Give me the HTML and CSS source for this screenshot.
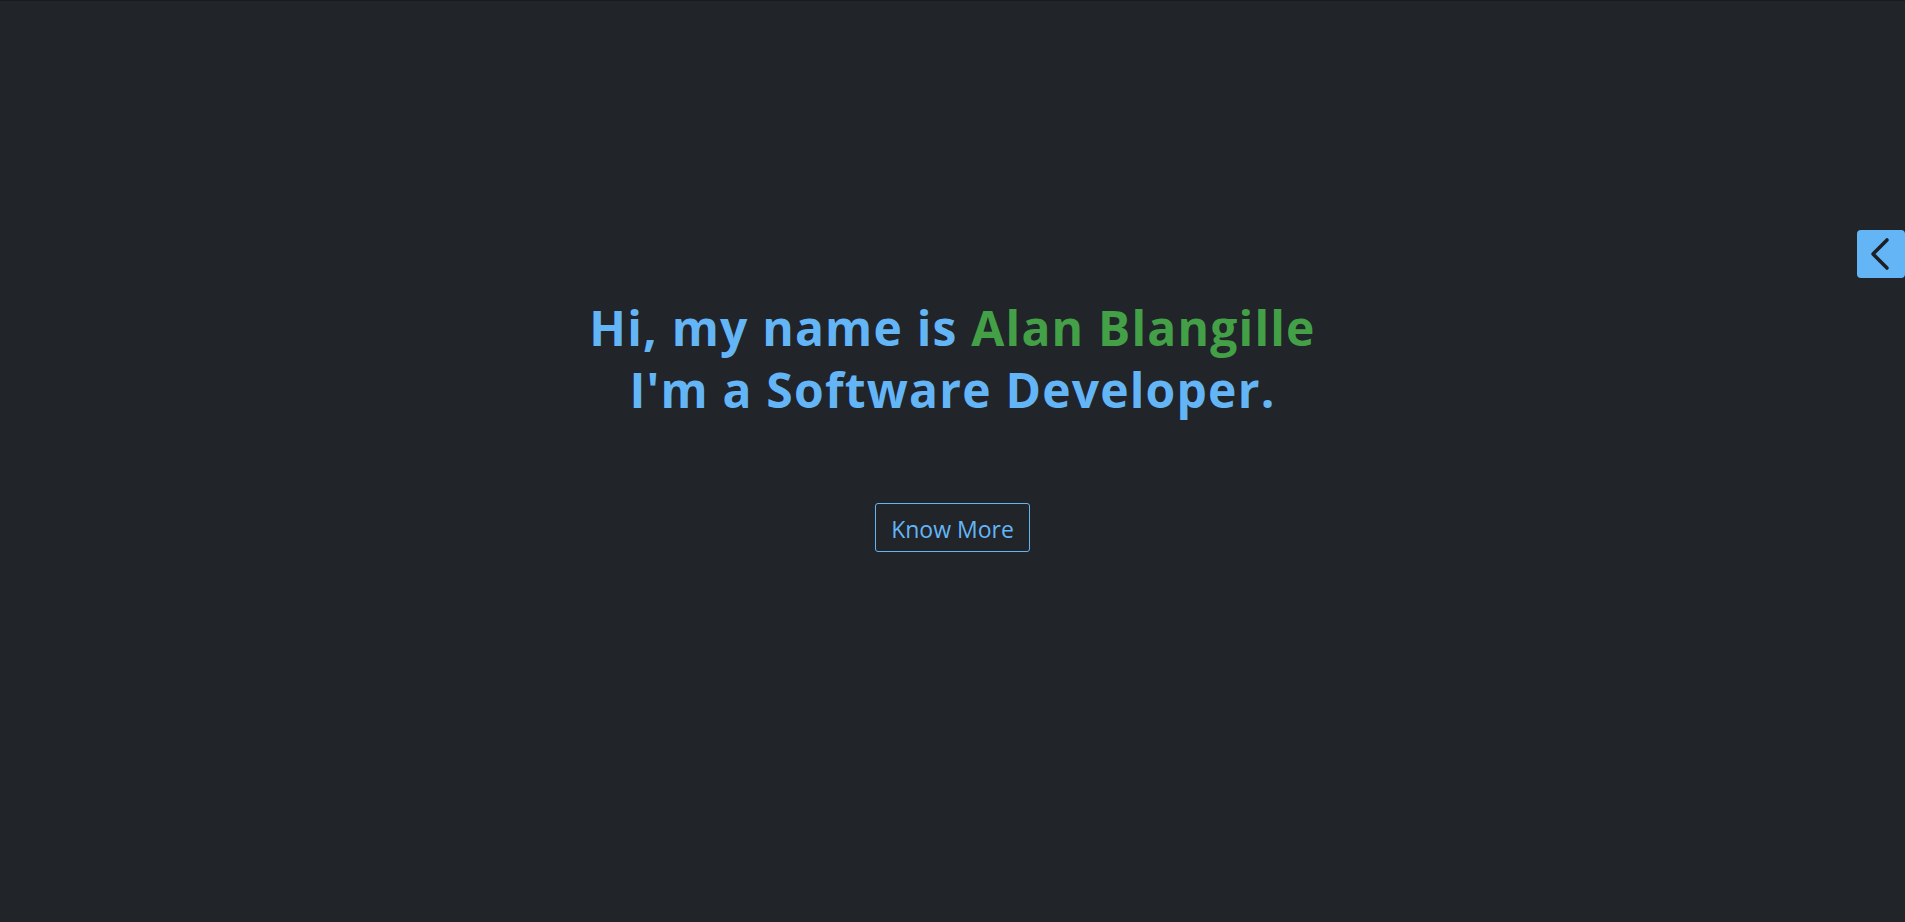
FILE: index.html
```html
<!DOCTYPE html>
<html lang="en">
<head>
<meta charset="utf-8">
<title>Alan Blangille</title>
<link rel="stylesheet" href="styles.css">
</head>
<body>
<main class="hero">
  <h1 class="hero-title">
    <span class="line">Hi, my name is <span class="name">Alan Blangille</span></span>
    <span class="line">I'm a Software Developer.</span>
  </h1>
  <a class="btn-more" href="#about">Know More</a>
</main>
<button class="side-tab" aria-label="Open menu">
  <svg width="48" height="48" viewBox="0 0 48 48"><path d="M30 10 L16 24 L30 38" fill="none" stroke="#1c2026" stroke-width="3.6" stroke-linecap="round" stroke-linejoin="round"/></svg>
</button>
</body>
</html>
```
FILE: styles.css
```css
html, body {
  margin: 0;
  padding: 0;
  height: 100%;
}
body {
  background: #212429;
  border-top: 1px solid #181b1f;
  box-sizing: border-box;
  overflow: hidden;
}
.hero {
  display: flex;
  flex-direction: column;
  align-items: center;
  padding-top: 296px;
}
.hero-title {
  margin: 0;
  font-family: "Open Sans", "Noto Sans", sans-serif;
  font-weight: 700;
  font-size: 48px;
  line-height: 62px;
  letter-spacing: 1.2px;
  color: #64b5f6;
  text-align: center;
  display: flex;
  flex-direction: column;
  align-items: center;
}
.line {
  white-space: nowrap;
}
.name {
  color: #43a047;
}
.btn-more {
  margin-top: 82px;
  display: flex;
  align-items: center;
  justify-content: center;
  width: 155px;
  height: 49px;
  padding-top: 3px;
  box-sizing: border-box;
  border: 1px solid #64b5f6;
  border-radius: 3px;
  color: #64b5f6;
  font-family: "Open Sans", "Noto Sans", sans-serif;
  font-size: 23px;
  text-decoration: none;
}
.side-tab {
  position: fixed;
  right: 0;
  top: 230px;
  width: 48px;
  height: 48px;
  padding: 0;
  border: none;
  border-radius: 4px;
  background: #64b5f6;
  display: flex;
  align-items: center;
  justify-content: center;
  cursor: pointer;
}
```
